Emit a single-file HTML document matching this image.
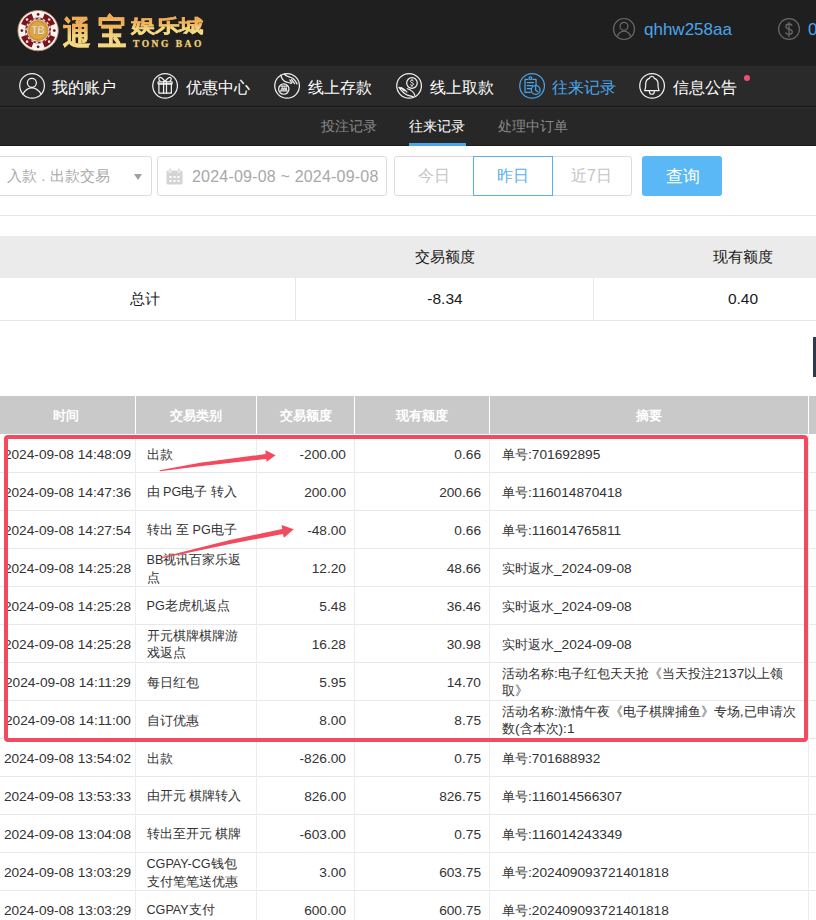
<!DOCTYPE html>
<html><head><meta charset="utf-8">
<style>
*{margin:0;padding:0;box-sizing:border-box}
html,body{width:816px;height:920px;overflow:hidden;background:#fff;font-family:"Liberation Sans",sans-serif;color:#333}
.abs{position:absolute}
.gold{font-family:"Liberation Serif",serif;font-weight:bold;white-space:nowrap;color:transparent;background:linear-gradient(180deg,#e8893c 0%,#ef9a48 35%,#f6df8a 58%,#fbf1a6 100%);-webkit-background-clip:text;background-clip:text;-webkit-text-stroke:0.6px rgba(240,200,110,0.55)}
#hdr{left:0;top:0;width:816px;height:66px;background:#1f1f1f}
#nav{left:0;top:66px;width:816px;height:41px;background:#2a2a2a;border-bottom:1px solid #141414}
#sub{left:0;top:107px;width:816px;height:39px;background:#272727;border-top:1px solid #313131;border-bottom:1px solid #1b1b1b}
.nt{color:#fff;font-size:16px;line-height:20px;white-space:nowrap;font-weight:500}
.st{color:#8a8a8a;font-size:14px;line-height:20px;white-space:nowrap}
.box{border:1px solid #dcdcdc;border-radius:3px;background:#fff}
.gt{color:#a8a8a8;font-size:14px;line-height:20px;white-space:nowrap}
.sumh{left:0;top:236px;width:816px;height:42px;background:#ebebeb}
.sumc{font-size:15px;line-height:20px;color:#1a1a1a;white-space:nowrap;text-align:center}
#th{left:0;top:396px;width:816px;height:38px;background:#c9c9c9}
.thc{color:#fff;font-weight:bold;font-size:13px;line-height:38px;text-align:center;top:1px;height:38px}
.vd{width:1px;background:#fff;top:0;height:38px}
.row{left:0;width:816px;height:38px;border-bottom:1px solid #e8e8e8}
.bd{width:1px;background:#ececec;top:0;height:38px}
.tw{position:absolute;top:0;height:38px;display:flex;align-items:center;left:0}
.tw .c{position:static}
.c{font-size:13px;color:#333;white-space:nowrap;line-height:17px}
.c i{font-style:normal;font-size:13.7px}
.c2 i{font-size:12.6px}
.tw:first-of-type{}
</style></head><body>
<div id="hdr" class="abs"></div>
<div id="nav" class="abs"></div>
<div id="sub" class="abs"></div>

<!-- logo chip -->
<svg class="abs" style="left:17px;top:10px" width="42" height="42" viewBox="0 0 42 42">
  <circle cx="21.1" cy="20.6" r="20.2" fill="#f8f3f3" stroke="#b98c68" stroke-width="0.9"/>
  <g fill="#7a1419"><path d="M38.09 27.12 A18.2 18.2 0 0 1 27.62 37.59 L25.62 32.36 A12.6 12.6 0 0 0 32.86 25.12 Z"/><path d="M14.58 37.59 A18.2 18.2 0 0 1 4.11 27.12 L9.34 25.12 A12.6 12.6 0 0 0 16.58 32.36 Z"/><path d="M4.11 14.08 A18.2 18.2 0 0 1 14.58 3.61 L16.58 8.84 A12.6 12.6 0 0 0 9.34 16.08 Z"/><path d="M27.62 3.61 A18.2 18.2 0 0 1 38.09 14.08 L32.86 16.08 A12.6 12.6 0 0 0 25.62 8.84 Z"/></g><circle cx="32.13" cy="31.63" r="1.3" fill="#fff" opacity="0.9"/><circle cx="10.07" cy="31.63" r="1.3" fill="#fff" opacity="0.9"/><circle cx="10.07" cy="9.57" r="1.3" fill="#fff" opacity="0.9"/><circle cx="32.13" cy="9.57" r="1.3" fill="#fff" opacity="0.9"/><circle cx="37.30" cy="20.60" r="1.4" fill="#7c1218"/><circle cx="21.10" cy="36.80" r="1.4" fill="#7c1218"/><circle cx="4.90" cy="20.60" r="1.4" fill="#7c1218"/><circle cx="21.10" cy="4.40" r="1.4" fill="#7c1218"/><circle cx="21.1" cy="20.6" r="12.0" fill="none" stroke="#8a2a30" stroke-width="2.0"/><circle cx="21.1" cy="20.6" r="12.0" fill="none" stroke="#f1e2e2" stroke-width="1.3" stroke-dasharray="2.2 2.5"/>
  <circle cx="21.1" cy="20.6" r="10.6" fill="#d49a38"/>
  <circle cx="21.1" cy="20.6" r="9.0" fill="#dba646" stroke="#c48c30" stroke-width="0.7"/>
  <text x="21.1" y="24.4" text-anchor="middle" font-family="Liberation Sans" font-weight="bold" font-size="10" fill="#fbf4e6" stroke="#9a6a20" stroke-width="0.25">TB</text>
</svg>
<div class="abs gold" style="left:62.8px;top:11.9px;font-size:31px;line-height:42px;transform-origin:0 0;transform:scale(.887,1.03)">通</div>
<div class="abs gold" style="left:97.7px;top:8.8px;font-size:31px;line-height:42px;transform-origin:0 0;transform:scale(.913,1.133)">宝</div>
<div class="abs gold" style="left:130.8px;top:16.3px;font-size:24px;line-height:28px;transform-origin:0 0;transform:scale(1.0,.73)">娱乐城</div>
<div class="abs gold" style="left:133px;top:39px;font-family:'Liberation Serif',serif;font-weight:bold;background:none;color:#efd27a;font-size:9.5px;line-height:10px;letter-spacing:2.5px">TONG BAO</div>

<!-- header right -->
<svg class="abs" style="left:612px;top:17px" width="24" height="24" viewBox="0 0 24 24" fill="none" stroke="#686868" stroke-width="1.2">
  <circle cx="12" cy="12" r="10.5"/><circle cx="12" cy="9.3" r="4"/><path d="M5.2 19.4C7 15.7 9.3 14.2 12 14.2C14.7 14.2 17 15.7 18.8 19.4"/>
</svg>
<div class="abs" style="left:644px;top:19px;color:#4aa6ea;font-size:17px;line-height:22px">qhhw258aa</div>
<svg class="abs" style="left:777px;top:17px" width="24" height="24" viewBox="0 0 24 24" fill="none" stroke="#686868" stroke-width="1.2">
  <circle cx="12" cy="12" r="10.4"/><path d="M15.2 8.7C14.7 7.6 13.6 7 12 7C10.1 7 8.9 8 8.9 9.4C8.9 12.9 15.3 11.2 15.3 14.8C15.3 16.4 14 17.4 12 17.4C10.2 17.4 9 16.7 8.5 15.5M12 4.9V20.3" stroke-width="1.3"/>
</svg>
<div class="abs" style="left:808px;top:19px;color:#4aa6ea;font-size:17px;line-height:22px">0</div>

<!-- nav -->
<svg class="abs" style="left:14px;top:68px" width="36" height="36" viewBox="0 0 816 816" fill="none" stroke="#f2f2f2" stroke-width="28" stroke-linecap="round" stroke-linejoin="round"><circle cx="410" cy="405" r="280"/><circle cx="405" cy="337" r="102"/><path d="M198 592 C260 495 330 452 405 452 C480 452 550 495 618 592"/></svg>
<svg class="abs" style="left:147px;top:68px" width="36" height="36" viewBox="0 0 816 816" fill="none" stroke="#f2f2f2" stroke-width="28" stroke-linecap="round" stroke-linejoin="round"><circle cx="410" cy="405" r="280"/><rect x="252" y="312" width="316" height="48"/><rect x="270" y="360" width="282" height="210"/><path d="M376 300 V572 M442 300 V572"/><path d="M405 300 C370 255 330 205 295 212 C255 222 262 275 300 300 M412 300 C447 255 487 205 522 212 C562 222 555 275 517 300"/></svg>
<svg class="abs" style="left:269px;top:68px" width="36" height="36" viewBox="0 0 816 816" fill="none" stroke="#f2f2f2" stroke-width="28" stroke-linecap="round" stroke-linejoin="round"><circle cx="410" cy="405" r="280"/><circle cx="335" cy="478" r="117"/><path d="M275 412 H400 M262 520 H410"/><path d="M268 505 L300 440 L320 500 L345 440 L365 500 L390 440 L400 500" stroke-width="22"/><path d="M268 160 C285 245 330 300 400 318 C440 330 480 335 505 350 M350 140 C380 180 430 200 500 215 C560 230 600 290 635 360 M470 270 L520 330 M510 260 L580 355"/></svg>
<svg class="abs" style="left:391px;top:68px" width="36" height="36" viewBox="0 0 816 816" fill="none" stroke="#f2f2f2" stroke-width="28" stroke-linecap="round" stroke-linejoin="round"><circle cx="410" cy="405" r="280"/><circle cx="475" cy="340" r="120"/><path d="M505 290 C490 270 440 270 440 305 C440 335 510 330 510 365 C510 400 455 400 440 380 M475 255 V275 M475 400 V420" stroke-width="22"/><path d="M180 440 C230 510 290 580 360 610 C410 630 460 640 500 650 M190 445 C230 430 260 470 300 520 M230 445 L300 490 C320 505 350 530 360 545 M370 470 C440 490 510 530 540 620"/></svg>
<svg class="abs" style="left:514px;top:68px" width="36" height="36" viewBox="0 0 816 816" fill="none" stroke="#4aa6ea" stroke-width="28" stroke-linecap="round" stroke-linejoin="round"><circle cx="410" cy="405" r="280"/><path d="M500 380 V260 H430 M310 260 H250 V555 H370"/><circle cx="370" cy="232" r="32"/><path d="M300 330 H440 M300 400 H420 M300 465 H385"/><circle cx="492" cy="498" r="100"/><path d="M490 425 V505 L540 535"/></svg>
<svg class="abs" style="left:634px;top:68px" width="36" height="36" viewBox="0 0 816 816" fill="none" stroke="#f2f2f2" stroke-width="28" stroke-linecap="round" stroke-linejoin="round"><circle cx="410" cy="405" r="280"/><path d="M240 515 C270 470 265 420 265 360 C265 290 300 250 350 235 C355 200 380 190 405 190 C430 190 455 200 460 235 C510 250 545 290 545 360 C545 420 540 470 570 515 Z"/><path d="M350 530 C350 570 375 595 405 595 C435 595 460 570 460 530"/></svg>
<div class="abs nt" style="left:52px;top:78px">我的账户</div>
<div class="abs nt" style="left:186px;top:78px">优惠中心</div>
<div class="abs nt" style="left:308px;top:78px">线上存款</div>
<div class="abs nt" style="left:430px;top:78px">线上取款</div>
<div class="abs nt" style="left:552px;top:78px;color:#4aa6ea">往来记录</div>
<div class="abs nt" style="left:673px;top:78px">信息公告</div>
<div class="abs" style="left:744px;top:75px;width:6px;height:6px;border-radius:3px;background:#f0506e"></div>

<!-- sub nav -->
<div class="abs st" style="left:321px;top:116px">投注记录</div>
<div class="abs st" style="left:409px;top:116px;color:#fff">往来记录</div>
<div class="abs st" style="left:498px;top:116px">处理中订单</div>
<div class="abs" style="left:409px;top:143px;width:57px;height:3px;background:#4aa6ea"></div>

<!-- filter row -->
<div class="abs box" style="left:-60px;top:156px;width:212px;height:40px"></div>
<div class="abs gt" style="left:7px;top:166px;font-size:15px">入款 . 出款交易</div>
<div class="abs" style="left:134px;top:174px;width:0;height:0;border-left:4px solid transparent;border-right:4px solid transparent;border-top:6px solid #a0a0a0"></div>
<div class="abs box" style="left:157px;top:156px;width:230px;height:40px"></div>
<svg class="abs" style="left:166px;top:168px" width="17" height="17" viewBox="0 0 17 17">
  <rect x="0.5" y="2.5" width="16" height="14" rx="1.5" fill="#d4d4d4"/>
  <rect x="3" y="0" width="2.2" height="4.5" rx="1" fill="#d4d4d4" stroke="#fff" stroke-width="0.8"/>
  <rect x="11.8" y="0" width="2.2" height="4.5" rx="1" fill="#d4d4d4" stroke="#fff" stroke-width="0.8"/>
  <g fill="#fff"><rect x="3.5" y="8" width="2" height="2"/><rect x="7.5" y="8" width="2" height="2"/><rect x="11.5" y="8" width="2" height="2"/><rect x="3.5" y="12" width="2" height="2"/><rect x="7.5" y="12" width="2" height="2"/><rect x="11.5" y="12" width="2" height="2"/></g>
</svg>
<div class="abs gt" style="left:192px;top:167px;font-size:16px;letter-spacing:0.2px">2024-09-08 ~ 2024-09-08</div>
<div class="abs box" style="left:394px;top:156px;width:238px;height:40px"></div>
<div class="abs" style="left:473px;top:156px;width:80px;height:40px;border:1px solid #5aaef0"></div>
<div class="abs gt" style="left:418px;top:166px;color:#c4c4c4;font-size:16px">今日</div>
<div class="abs gt" style="left:497px;top:166px;color:#5aaef0;font-size:16px">昨日</div>
<div class="abs gt" style="left:571px;top:166px;color:#c4c4c4;font-size:16px">近<span style="font-size:16px">7</span>日</div>
<div class="abs" style="left:642px;top:156px;width:80px;height:40px;border-radius:3px;background:#5bb8f6"></div>
<div class="abs" style="left:666px;top:166px;color:#fff;font-size:16.5px;line-height:20px">查询</div>

<div class="abs" style="left:0;top:215px;width:816px;height:1px;background:#e6e6e6"></div>

<!-- summary -->
<div class="abs sumh"></div>
<div class="abs sumc" style="left:395px;top:247px;width:100px">交易额度</div>
<div class="abs sumc" style="left:693px;top:247px;width:100px">现有额度</div>
<div class="abs" style="left:0;top:320px;width:816px;height:1px;background:#e6e6e6"></div>
<div class="abs" style="left:295px;top:278px;width:1px;height:42px;background:#e6e6e6"></div>
<div class="abs" style="left:593px;top:278px;width:1px;height:42px;background:#e6e6e6"></div>
<div class="abs sumc" style="left:95px;top:289px;width:100px">总计</div>
<div class="abs sumc" style="left:395px;top:289px;width:100px;font-size:15.5px">-8.34</div>
<div class="abs sumc" style="left:693px;top:289px;width:100px;font-size:15.5px">0.40</div>

<div class="abs" style="left:813px;top:337px;width:3px;height:40px;background:#2c3b4d"></div>

<!-- main table header -->
<div id="th" class="abs">
  <div class="abs thc" style="left:-3px;width:138px">时间</div>
  <div class="abs vd" style="left:135px"></div>
  <div class="abs thc" style="left:136px;width:120px">交易类别</div>
  <div class="abs vd" style="left:256px"></div>
  <div class="abs thc" style="left:257px;width:97px">交易额度</div>
  <div class="abs vd" style="left:354px"></div>
  <div class="abs thc" style="left:355px;width:134px">现有额度</div>
  <div class="abs vd" style="left:489px"></div>
  <div class="abs thc" style="left:490px;width:318px">摘要</div>
  <div class="abs vd" style="left:808px"></div>
</div>

<div id="rows">
<div class="abs row" style="top:435px">
<div class="abs bd" style="left:135px"></div>
<div class="abs bd" style="left:256px"></div>
<div class="abs bd" style="left:354px"></div>
<div class="abs bd" style="left:489px"></div>
<div class="abs bd" style="left:808px"></div>
<div class="tw" style="left:0;width:131px;justify-content:flex-end"><div class="c"><i>2024-09-08 14:48:09</i></div></div>
<div class="tw" style="left:146.5px"><div class="c c2">出款</div></div>
<div class="tw" style="left:257px;width:89px;justify-content:flex-end"><div class="c"><i>-200.00</i></div></div>
<div class="tw" style="left:355px;width:126px;justify-content:flex-end"><div class="c"><i>0.66</i></div></div>
<div class="tw" style="left:502px"><div class="c">单号<i>:701692895</i></div></div>
</div>
<div class="abs row" style="top:473px">
<div class="abs bd" style="left:135px"></div>
<div class="abs bd" style="left:256px"></div>
<div class="abs bd" style="left:354px"></div>
<div class="abs bd" style="left:489px"></div>
<div class="abs bd" style="left:808px"></div>
<div class="tw" style="left:0;width:131px;justify-content:flex-end"><div class="c"><i>2024-09-08 14:47:36</i></div></div>
<div class="tw" style="left:146.5px"><div class="c c2">由<i> PG</i>电子<i> </i>转入</div></div>
<div class="tw" style="left:257px;width:89px;justify-content:flex-end"><div class="c"><i>200.00</i></div></div>
<div class="tw" style="left:355px;width:126px;justify-content:flex-end"><div class="c"><i>200.66</i></div></div>
<div class="tw" style="left:502px"><div class="c">单号<i>:116014870418</i></div></div>
</div>
<div class="abs row" style="top:511px">
<div class="abs bd" style="left:135px"></div>
<div class="abs bd" style="left:256px"></div>
<div class="abs bd" style="left:354px"></div>
<div class="abs bd" style="left:489px"></div>
<div class="abs bd" style="left:808px"></div>
<div class="tw" style="left:0;width:131px;justify-content:flex-end"><div class="c"><i>2024-09-08 14:27:54</i></div></div>
<div class="tw" style="left:146.5px"><div class="c c2">转出<i> </i>至<i> PG</i>电子</div></div>
<div class="tw" style="left:257px;width:89px;justify-content:flex-end"><div class="c"><i>-48.00</i></div></div>
<div class="tw" style="left:355px;width:126px;justify-content:flex-end"><div class="c"><i>0.66</i></div></div>
<div class="tw" style="left:502px"><div class="c">单号<i>:116014765811</i></div></div>
</div>
<div class="abs row" style="top:549px">
<div class="abs bd" style="left:135px"></div>
<div class="abs bd" style="left:256px"></div>
<div class="abs bd" style="left:354px"></div>
<div class="abs bd" style="left:489px"></div>
<div class="abs bd" style="left:808px"></div>
<div class="tw" style="left:0;width:131px;justify-content:flex-end"><div class="c"><i>2024-09-08 14:25:28</i></div></div>
<div class="tw" style="left:146.5px"><div class="c c2"><i>BB</i>视讯百家乐返<br>点</div></div>
<div class="tw" style="left:257px;width:89px;justify-content:flex-end"><div class="c"><i>12.20</i></div></div>
<div class="tw" style="left:355px;width:126px;justify-content:flex-end"><div class="c"><i>48.66</i></div></div>
<div class="tw" style="left:502px"><div class="c">实时返水<i>_2024-09-08</i></div></div>
</div>
<div class="abs row" style="top:587px">
<div class="abs bd" style="left:135px"></div>
<div class="abs bd" style="left:256px"></div>
<div class="abs bd" style="left:354px"></div>
<div class="abs bd" style="left:489px"></div>
<div class="abs bd" style="left:808px"></div>
<div class="tw" style="left:0;width:131px;justify-content:flex-end"><div class="c"><i>2024-09-08 14:25:28</i></div></div>
<div class="tw" style="left:146.5px"><div class="c c2"><i>PG</i>老虎机返点</div></div>
<div class="tw" style="left:257px;width:89px;justify-content:flex-end"><div class="c"><i>5.48</i></div></div>
<div class="tw" style="left:355px;width:126px;justify-content:flex-end"><div class="c"><i>36.46</i></div></div>
<div class="tw" style="left:502px"><div class="c">实时返水<i>_2024-09-08</i></div></div>
</div>
<div class="abs row" style="top:625px">
<div class="abs bd" style="left:135px"></div>
<div class="abs bd" style="left:256px"></div>
<div class="abs bd" style="left:354px"></div>
<div class="abs bd" style="left:489px"></div>
<div class="abs bd" style="left:808px"></div>
<div class="tw" style="left:0;width:131px;justify-content:flex-end"><div class="c"><i>2024-09-08 14:25:28</i></div></div>
<div class="tw" style="left:146.5px"><div class="c c2">开元棋牌棋牌游<br>戏返点</div></div>
<div class="tw" style="left:257px;width:89px;justify-content:flex-end"><div class="c"><i>16.28</i></div></div>
<div class="tw" style="left:355px;width:126px;justify-content:flex-end"><div class="c"><i>30.98</i></div></div>
<div class="tw" style="left:502px"><div class="c">实时返水<i>_2024-09-08</i></div></div>
</div>
<div class="abs row" style="top:663px">
<div class="abs bd" style="left:135px"></div>
<div class="abs bd" style="left:256px"></div>
<div class="abs bd" style="left:354px"></div>
<div class="abs bd" style="left:489px"></div>
<div class="abs bd" style="left:808px"></div>
<div class="tw" style="left:0;width:131px;justify-content:flex-end"><div class="c"><i>2024-09-08 14:11:29</i></div></div>
<div class="tw" style="left:146.5px"><div class="c c2">每日红包</div></div>
<div class="tw" style="left:257px;width:89px;justify-content:flex-end"><div class="c"><i>5.95</i></div></div>
<div class="tw" style="left:355px;width:126px;justify-content:flex-end"><div class="c"><i>14.70</i></div></div>
<div class="tw" style="left:502px"><div class="c">活动名称<i>:</i>电子红包天天抢《当天投注<i>2137</i>以上领<br>取》</div></div>
</div>
<div class="abs row" style="top:701px">
<div class="abs bd" style="left:135px"></div>
<div class="abs bd" style="left:256px"></div>
<div class="abs bd" style="left:354px"></div>
<div class="abs bd" style="left:489px"></div>
<div class="abs bd" style="left:808px"></div>
<div class="tw" style="left:0;width:131px;justify-content:flex-end"><div class="c"><i>2024-09-08 14:11:00</i></div></div>
<div class="tw" style="left:146.5px"><div class="c c2">自订优惠</div></div>
<div class="tw" style="left:257px;width:89px;justify-content:flex-end"><div class="c"><i>8.00</i></div></div>
<div class="tw" style="left:355px;width:126px;justify-content:flex-end"><div class="c"><i>8.75</i></div></div>
<div class="tw" style="left:502px"><div class="c">活动名称<i>:</i>激情午夜《电子棋牌捕鱼》专场<i>,</i>已申请次<br>数<i>(</i>含本次<i>):1</i></div></div>
</div>
<div class="abs row" style="top:739px">
<div class="abs bd" style="left:135px"></div>
<div class="abs bd" style="left:256px"></div>
<div class="abs bd" style="left:354px"></div>
<div class="abs bd" style="left:489px"></div>
<div class="abs bd" style="left:808px"></div>
<div class="tw" style="left:0;width:131px;justify-content:flex-end"><div class="c"><i>2024-09-08 13:54:02</i></div></div>
<div class="tw" style="left:146.5px"><div class="c c2">出款</div></div>
<div class="tw" style="left:257px;width:89px;justify-content:flex-end"><div class="c"><i>-826.00</i></div></div>
<div class="tw" style="left:355px;width:126px;justify-content:flex-end"><div class="c"><i>0.75</i></div></div>
<div class="tw" style="left:502px"><div class="c">单号<i>:701688932</i></div></div>
</div>
<div class="abs row" style="top:777px">
<div class="abs bd" style="left:135px"></div>
<div class="abs bd" style="left:256px"></div>
<div class="abs bd" style="left:354px"></div>
<div class="abs bd" style="left:489px"></div>
<div class="abs bd" style="left:808px"></div>
<div class="tw" style="left:0;width:131px;justify-content:flex-end"><div class="c"><i>2024-09-08 13:53:33</i></div></div>
<div class="tw" style="left:146.5px"><div class="c c2">由开元<i> </i>棋牌转入</div></div>
<div class="tw" style="left:257px;width:89px;justify-content:flex-end"><div class="c"><i>826.00</i></div></div>
<div class="tw" style="left:355px;width:126px;justify-content:flex-end"><div class="c"><i>826.75</i></div></div>
<div class="tw" style="left:502px"><div class="c">单号<i>:116014566307</i></div></div>
</div>
<div class="abs row" style="top:815px">
<div class="abs bd" style="left:135px"></div>
<div class="abs bd" style="left:256px"></div>
<div class="abs bd" style="left:354px"></div>
<div class="abs bd" style="left:489px"></div>
<div class="abs bd" style="left:808px"></div>
<div class="tw" style="left:0;width:131px;justify-content:flex-end"><div class="c"><i>2024-09-08 13:04:08</i></div></div>
<div class="tw" style="left:146.5px"><div class="c c2">转出至开元<i> </i>棋牌</div></div>
<div class="tw" style="left:257px;width:89px;justify-content:flex-end"><div class="c"><i>-603.00</i></div></div>
<div class="tw" style="left:355px;width:126px;justify-content:flex-end"><div class="c"><i>0.75</i></div></div>
<div class="tw" style="left:502px"><div class="c">单号<i>:116014243349</i></div></div>
</div>
<div class="abs row" style="top:853px">
<div class="abs bd" style="left:135px"></div>
<div class="abs bd" style="left:256px"></div>
<div class="abs bd" style="left:354px"></div>
<div class="abs bd" style="left:489px"></div>
<div class="abs bd" style="left:808px"></div>
<div class="tw" style="left:0;width:131px;justify-content:flex-end"><div class="c"><i>2024-09-08 13:03:29</i></div></div>
<div class="tw" style="left:146.5px"><div class="c c2"><i>CGPAY-CG</i>钱包<br>支付笔笔送优惠</div></div>
<div class="tw" style="left:257px;width:89px;justify-content:flex-end"><div class="c"><i>3.00</i></div></div>
<div class="tw" style="left:355px;width:126px;justify-content:flex-end"><div class="c"><i>603.75</i></div></div>
<div class="tw" style="left:502px"><div class="c">单号<i>:202409093721401818</i></div></div>
</div>
<div class="abs row" style="top:891px">
<div class="abs bd" style="left:135px"></div>
<div class="abs bd" style="left:256px"></div>
<div class="abs bd" style="left:354px"></div>
<div class="abs bd" style="left:489px"></div>
<div class="abs bd" style="left:808px"></div>
<div class="tw" style="left:0;width:131px;justify-content:flex-end"><div class="c"><i>2024-09-08 13:03:29</i></div></div>
<div class="tw" style="left:146.5px"><div class="c c2"><i>CGPAY</i>支付</div></div>
<div class="tw" style="left:257px;width:89px;justify-content:flex-end"><div class="c"><i>600.00</i></div></div>
<div class="tw" style="left:355px;width:126px;justify-content:flex-end"><div class="c"><i>600.75</i></div></div>
<div class="tw" style="left:502px"><div class="c">单号<i>:202409093721401818</i></div></div>
</div>
</div><!-- /rows -->
<!-- annotation -->
<div class="abs" style="left:4px;top:435px;width:804px;height:307px;border:4px solid #f24a5f;border-radius:4px"></div>
<svg class="abs" style="left:0;top:0" width="816" height="920" viewBox="0 0 816 920">
  <path d="M159.5 470.3 L200 462.8 L265.6 454.1 L265.4 450.3 L275.6 455.2 L266.7 461.8 L266.2 459.0 L200 466.2 L160 471.2 Z" fill="#f24a5f"/>
  <path d="M161.5 557.3 L230 540.0 L282.3 529.1 L281.6 525.0 L293.8 529.2 L283.8 537.8 L283.0 534.0 L230 543.9 L162 558.3 Z" fill="#f24a5f"/>
</svg>
</body></html>
